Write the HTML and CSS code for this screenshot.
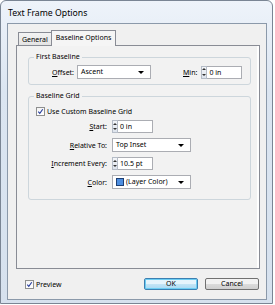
FILE: index.html
```html
<!DOCTYPE html>
<html lang="en">
<head>
    <meta charset="UTF-8">
    <title>Text Frame Options</title>
    <link rel="stylesheet" href="styles.css">
</head>
<body>
    <div class="window">
        <div class="title">Text Frame Options</div>
        <div class="client">
            <div class="tabs">
                <div class="tab">General</div>
                <div class="tab active">Baseline Options</div>
            </div>
            <div class="panel">
                <fieldset class="group group-first">
                    <legend>First Baseline</legend>
                    <div class="first-row">
                        <span class="label"><u>O</u>ffset:</span>
                        <div class="select select-offset">Ascent<span class="arrow"></span></div>
                        <span class="label label-min"><u>M</u>in:</span>
                        <div class="spin">
                            <span class="spin-btn"><i class="up"></i><i class="down"></i></span>
                            <span class="spin-field">0 in</span>
                        </div>
                    </div>
                </fieldset>

                <fieldset class="group group-grid">
                    <legend>Baseline Grid</legend>
                    <label class="check check-grid"><span class="box"><svg viewBox="0 0 9 9"><path d="M1.6 4.6 L3.6 6.8 L7.4 1.6" /></svg></span>Use Custom Baseline Grid</label>
                    <div class="grid-rows">
                        <span class="label"><u>S</u>tart:</span>
                        <div class="spin">
                            <span class="spin-btn"><i class="up"></i><i class="down"></i></span>
                            <span class="spin-field">0 in</span>
                        </div>

                        <span class="label"><u>R</u>elative To:</span>
                        <div class="select select-wide">Top Inset<span class="arrow"></span></div>

                        <span class="label"><u>I</u>ncrement Every:</span>
                        <div class="spin">
                            <span class="spin-btn"><i class="up"></i><i class="down"></i></span>
                            <span class="spin-field">10.5 pt</span>
                        </div>

                        <span class="label"><u>C</u>olor:</span>
                        <div class="select select-wide"><span class="swatch"></span>(Layer Color)<span class="arrow"></span></div>
                    </div>
                </fieldset>
            </div>
            <div class="footer">
                <label class="check"><span class="box"><svg viewBox="0 0 9 9"><path d="M1.6 4.6 L3.6 6.8 L7.4 1.6" /></svg></span>Preview</label>
                <div class="buttons">
                    <button class="btn btn-default">OK</button>
                    <button class="btn">Cancel</button>
                </div>
            </div>
        </div>
    </div>
</body>
</html>
```

FILE: styles.css
```css
body {
    margin: 0;
    background: #fff;
    font-family: "Noto Sans", "DejaVu Sans", sans-serif;
    font-size: 7px;
    color: #000;
}
.window {
    width: 273px;
    height: 304px;
    box-sizing: border-box;
    border: 1px solid #7a8594;
    border-radius: 6px 6px 0 0;
    background: linear-gradient(#eef3fa, #dbe5f1 30%, #d6e1ee);
    padding: 0 5px 3px 6px;
    display: flex;
    flex-direction: column;
}
.title {
    height: 22px;
    line-height: 24px;
    font-size: 8.7px;
    padding-left: 1px;
}
.client {
    flex: 1;
    border: 1px solid #8b99aa;
    background: #f0f0f0;
    padding: 7px 6px 0 8px;
    display: flex;
    flex-direction: column;
}

/* tabs */
.tabs {
    display: flex;
    align-items: flex-end;
    height: 14px;
    padding-left: 2px;
}
.tab {
    height: 12px;
    line-height: 13px;
    padding: 0 3px;
    border: 1px solid #898c95;
    border-bottom: none;
    background: linear-gradient(#f3f3f3, #e4e4e4);
}
.tab.active {
    height: 15px;
    margin-bottom: -1px;
    margin-left: -1px;
    padding: 0 4px;
    line-height: 14px;
    background: #f5f5f5;
    position: relative;
    z-index: 1;
}
.panel {
    height: 224px;
    box-sizing: border-box;
    border: 1px solid #898c95;
    background: #f2f2f2;
    box-shadow: inset -2px 0 0 #fff;
    padding: 6px 8px 0 11px;
}

/* group boxes */
.group {
    margin: 0;
    padding: 0;
    border: 1px solid #cdd6dc;
    border-radius: 3px;
}
.group legend {
    margin-left: 5px;
    padding: 0 2px;
    line-height: 10px;
}
.group-first {
    height: 33px;
    box-sizing: border-box;
}
.group-grid {
    margin-top: 6px;
    height: 109px;
    box-sizing: border-box;
}
.first-row {
    display: flex;
    align-items: center;
    padding: 3px 0 0 23px;
}
.label {
    white-space: nowrap;
}
.label-min {
    margin-left: 32px;
    margin-right: 4px;
}
.select-offset {
    margin-left: 3px;
    width: 74px;
}

/* controls */
.select {
    position: relative;
    height: 14px;
    line-height: 14px;
    box-sizing: border-box;
    border: 1px solid #abadb3;
    background: #fff;
    padding-left: 3px;
    display: flex;
    align-items: center;
}
.select-wide {
    width: 79px;
}
.arrow {
    position: absolute;
    right: 6px;
    top: 5px;
    border-left: 3px solid transparent;
    border-right: 3px solid transparent;
    border-top: 3px solid #000;
}
.swatch {
    width: 6px;
    height: 6px;
    border: 1px solid #1d3f73;
    background: #4d8ee0;
    margin-right: 2px;
}
.spin {
    display: flex;
    height: 13px;
}
.spin-btn {
    width: 6px;
    box-sizing: border-box;
    border: 1px solid #b5bcc7;
    background: linear-gradient(#f4f6f9, #dde3ec);
    display: flex;
    flex-direction: column;
    justify-content: space-around;
    align-items: center;
}
.spin-btn i {
    border-left: 2px solid transparent;
    border-right: 2px solid transparent;
}
.spin-btn .up {
    border-bottom: 2px solid #333;
}
.spin-btn .down {
    border-top: 2px solid #333;
}
.spin-field {
    width: 35px;
    box-sizing: border-box;
    border: 1px solid #abadb3;
    border-left: none;
    background: #fff;
    line-height: 11px;
    padding-left: 2px;
}

/* checkboxes */
.check {
    display: flex;
    align-items: center;
}
.box {
    width: 9px;
    height: 9px;
    box-sizing: border-box;
    border: 1px solid #8e8f8f;
    background: linear-gradient(#f4f4f4, #fff);
    margin-right: 2px;
}
.box svg {
    display: block;
    width: 7px;
    height: 7px;
}
.box path {
    fill: none;
    stroke: #21399b;
    stroke-width: 1.4;
}
.check-grid {
    margin: 6px 0 0 7px;
}
.grid-rows {
    display: grid;
    grid-template-columns: 78px auto;
    column-gap: 5px;
    row-gap: 5px;
    align-items: center;
    justify-items: start;
    margin-top: 4px;
}
.grid-rows .label {
    justify-self: end;
}

/* footer */
.footer {
    flex: 1;
    display: flex;
    align-items: center;
    justify-content: space-between;
    padding: 0 1px 0 9px;
}
.buttons {
    display: flex;
    gap: 7px;
}
.btn {
    width: 54px;
    height: 12px;
    padding: 0;
    font-family: inherit;
    font-size: 7px;
    line-height: 10px;
    border: 1px solid #707070;
    border-radius: 2px;
    background: linear-gradient(#f2f2f2 50%, #dcdcdc 50%, #cfcfcf);
}
.btn-default {
    border-color: #3c7fb1;
    background: linear-gradient(#e5f4fc 50%, #c4e5f6 50%, #a9d9f3);
    box-shadow: inset 0 0 0 1px #6ccdf3;
}
```
